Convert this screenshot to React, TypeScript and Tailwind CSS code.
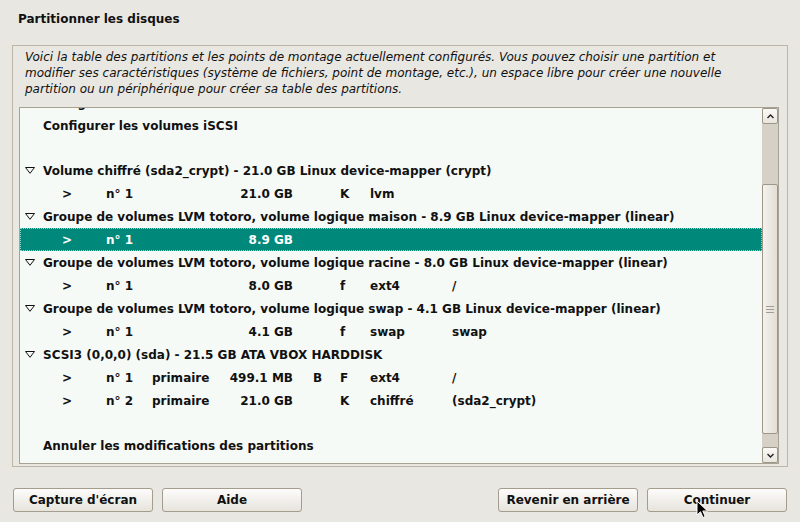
import React from 'react';

type Part = {
  num: string;
  type?: string;
  size: string;
  boot?: string;
  flag?: string;
  fs?: string;
  mount?: string;
  selected?: boolean;
};

type Row =
  | { kind: 'action'; text: string }
  | { kind: 'group'; text: string }
  | { kind: 'part'; part: Part }
  | { kind: 'blank' };

const rows: Row[] = [
  { kind: 'action', text: 'Configurer les volumes chiffrés' },
  { kind: 'action', text: 'Configurer les volumes iSCSI' },
  { kind: 'blank' },
  { kind: 'group', text: 'Volume chiffré (sda2_crypt) - 21.0 GB Linux device-mapper (crypt)' },
  { kind: 'part', part: { num: 'n° 1', size: '21.0 GB', flag: 'K', fs: 'lvm' } },
  { kind: 'group', text: 'Groupe de volumes LVM totoro, volume logique maison - 8.9 GB Linux device-mapper (linear)' },
  { kind: 'part', part: { num: 'n° 1', size: '8.9 GB', selected: true } },
  { kind: 'group', text: 'Groupe de volumes LVM totoro, volume logique racine - 8.0 GB Linux device-mapper (linear)' },
  { kind: 'part', part: { num: 'n° 1', size: '8.0 GB', flag: 'f', fs: 'ext4', mount: '/' } },
  { kind: 'group', text: 'Groupe de volumes LVM totoro, volume logique swap - 4.1 GB Linux device-mapper (linear)' },
  { kind: 'part', part: { num: 'n° 1', size: '4.1 GB', flag: 'f', fs: 'swap', mount: 'swap' } },
  { kind: 'group', text: 'SCSI3 (0,0,0) (sda) - 21.5 GB ATA VBOX HARDDISK' },
  { kind: 'part', part: { num: 'n° 1', type: 'primaire', size: '499.1 MB', boot: 'B', flag: 'F', fs: 'ext4', mount: '/' } },
  { kind: 'part', part: { num: 'n° 2', type: 'primaire', size: '21.0 GB', flag: 'K', fs: 'chiffré', mount: '(sda2_crypt)' } },
  { kind: 'blank' },
  { kind: 'action', text: 'Annuler les modifications des partitions' },
];

function Expander() {
  return (
    <svg width="10" height="7" viewBox="0 0 10 7" className="mr-[8px] shrink-0">
      <polygon points="0.5,0.5 9.5,0.5 5,6.3" fill="none" stroke="#111" strokeWidth="1" />
    </svg>
  );
}

function TreeRow({ row }: { row: Row }) {
  if (row.kind === 'blank') return <div className="h-[22px]" />;
  if (row.kind === 'action') {
    return <div className="flex h-[23px] items-center pl-[23px] whitespace-nowrap">{row.text}</div>;
  }
  if (row.kind === 'group') {
    return (
      <div className="flex h-[23px] items-center pl-[5px] whitespace-nowrap">
        <Expander />
        {row.text}
      </div>
    );
  }
  const p = row.part;
  return (
    <div
      className={`flex h-[23px] items-center pl-[42px] whitespace-nowrap ${
        p.selected ? 'bg-[#00897b] text-white outline outline-1 outline-dotted outline-offset-[-1px] outline-[#8fd0c8]' : ''
      }`}
    >
      <span className="w-[44px]">&gt;</span>
      <span className="w-[46px]">{p.num}</span>
      <span className="w-[70px]">{p.type}</span>
      <span className="w-[71px] text-right">{p.size}</span>
      <span className="w-[47px] pl-[20px]">{p.boot}</span>
      <span className="w-[30px]">{p.flag}</span>
      <span className="w-[82px]">{p.fs}</span>
      <span>{p.mount}</span>
    </div>
  );
}

function Scrollbar() {
  return (
    <div className="flex h-full w-[16px] shrink-0 flex-col bg-[#d6d1c6]">
      <div className="flex h-[16px] items-center justify-center rounded-[2px] border border-[#9e9787] bg-linear-to-b from-[#fbfaf7] to-[#e9e6df]">
        <svg width="7" height="5" viewBox="0 0 7 5">
          <path d="M0.5 4 L3.5 1 L6.5 4" fill="none" stroke="#222" strokeWidth="1.4" />
        </svg>
      </div>
      <div className="h-[60px]" />
      <div className="flex h-[250px] items-center justify-center rounded-[2px] border border-[#9e9787] bg-linear-to-r from-[#f4f2ee] to-[#e2ded6]">
        <div className="flex w-[8px] flex-col gap-[2px]">
          <div className="h-px bg-[#a39c8d]" />
          <div className="h-px bg-[#a39c8d]" />
          <div className="h-px bg-[#a39c8d]" />
        </div>
      </div>
      <div className="flex-1" />
      <div className="flex h-[16px] items-center justify-center rounded-[2px] border border-[#9e9787] bg-linear-to-b from-[#fbfaf7] to-[#e9e6df]">
        <svg width="7" height="5" viewBox="0 0 7 5">
          <path d="M0.5 1 L3.5 4 L6.5 1" fill="none" stroke="#222" strokeWidth="1.4" />
        </svg>
      </div>
    </div>
  );
}

function Button({ label }: { label: string }) {
  return (
    <button className="h-[24px] w-[140px] rounded-[3px] border border-[#a49c8c] bg-linear-to-b from-[#fdfcfb] to-[#e7e4dd] text-[12px] font-bold text-[#111]">
      {label}
    </button>
  );
}

export default function App() {
  return (
    <div className="relative flex h-[522px] w-[800px] flex-col overflow-hidden bg-[#e9e7e2] font-['DejaVu_Sans',sans-serif] text-[12px] text-[#111]">
      <h1 className="pl-[18px] pt-[11px] text-[12px] font-bold leading-[16px]">Partitionner les disques</h1>

      <div className="mx-[12px] mt-[18px] flex flex-col border border-[#bdb5a6] pb-[2px] pl-[6px] pr-[8px] pt-[3px]">
        <p className="pl-[6px] italic leading-[16px] whitespace-nowrap">
          Voici la table des partitions et les points de montage actuellement configurés. Vous pouvez choisir une partition et
          <br />
          modifier ses caractéristiques (système de fichiers, point de montage, etc.), un espace libre pour créer une nouvelle
          <br />
          partition ou un périphérique pour créer sa table des partitions.
        </p>

        <div className="mt-[10px] flex h-[357px] border border-[#a8a295] bg-[#f6faf7]">
          <div className="flex-1 overflow-hidden font-bold">
            <div className="mt-[-17px]">
              {rows.map((r, i) => (
                <TreeRow key={i} row={r} />
              ))}
            </div>
          </div>
          <Scrollbar />
        </div>
      </div>

      <div className="mt-[21px] flex px-[13px]">
        <div className="flex gap-[9px]">
          <Button label="Capture d'écran" />
          <Button label="Aide" />
        </div>
        <div className="ml-auto flex gap-[9px]">
          <Button label="Revenir en arrière" />
          <Button label="Continuer" />
        </div>
      </div>

      <svg className="absolute left-[696px] top-[500px]" width="13" height="19" viewBox="0 0 13 19">
        <path d="M1 1 L1 15 L4.5 11.8 L7 17.5 L9.2 16.5 L6.8 11 L11.5 11 Z" fill="#000" stroke="#fff" strokeWidth="1" />
      </svg>
    </div>
  );
}
